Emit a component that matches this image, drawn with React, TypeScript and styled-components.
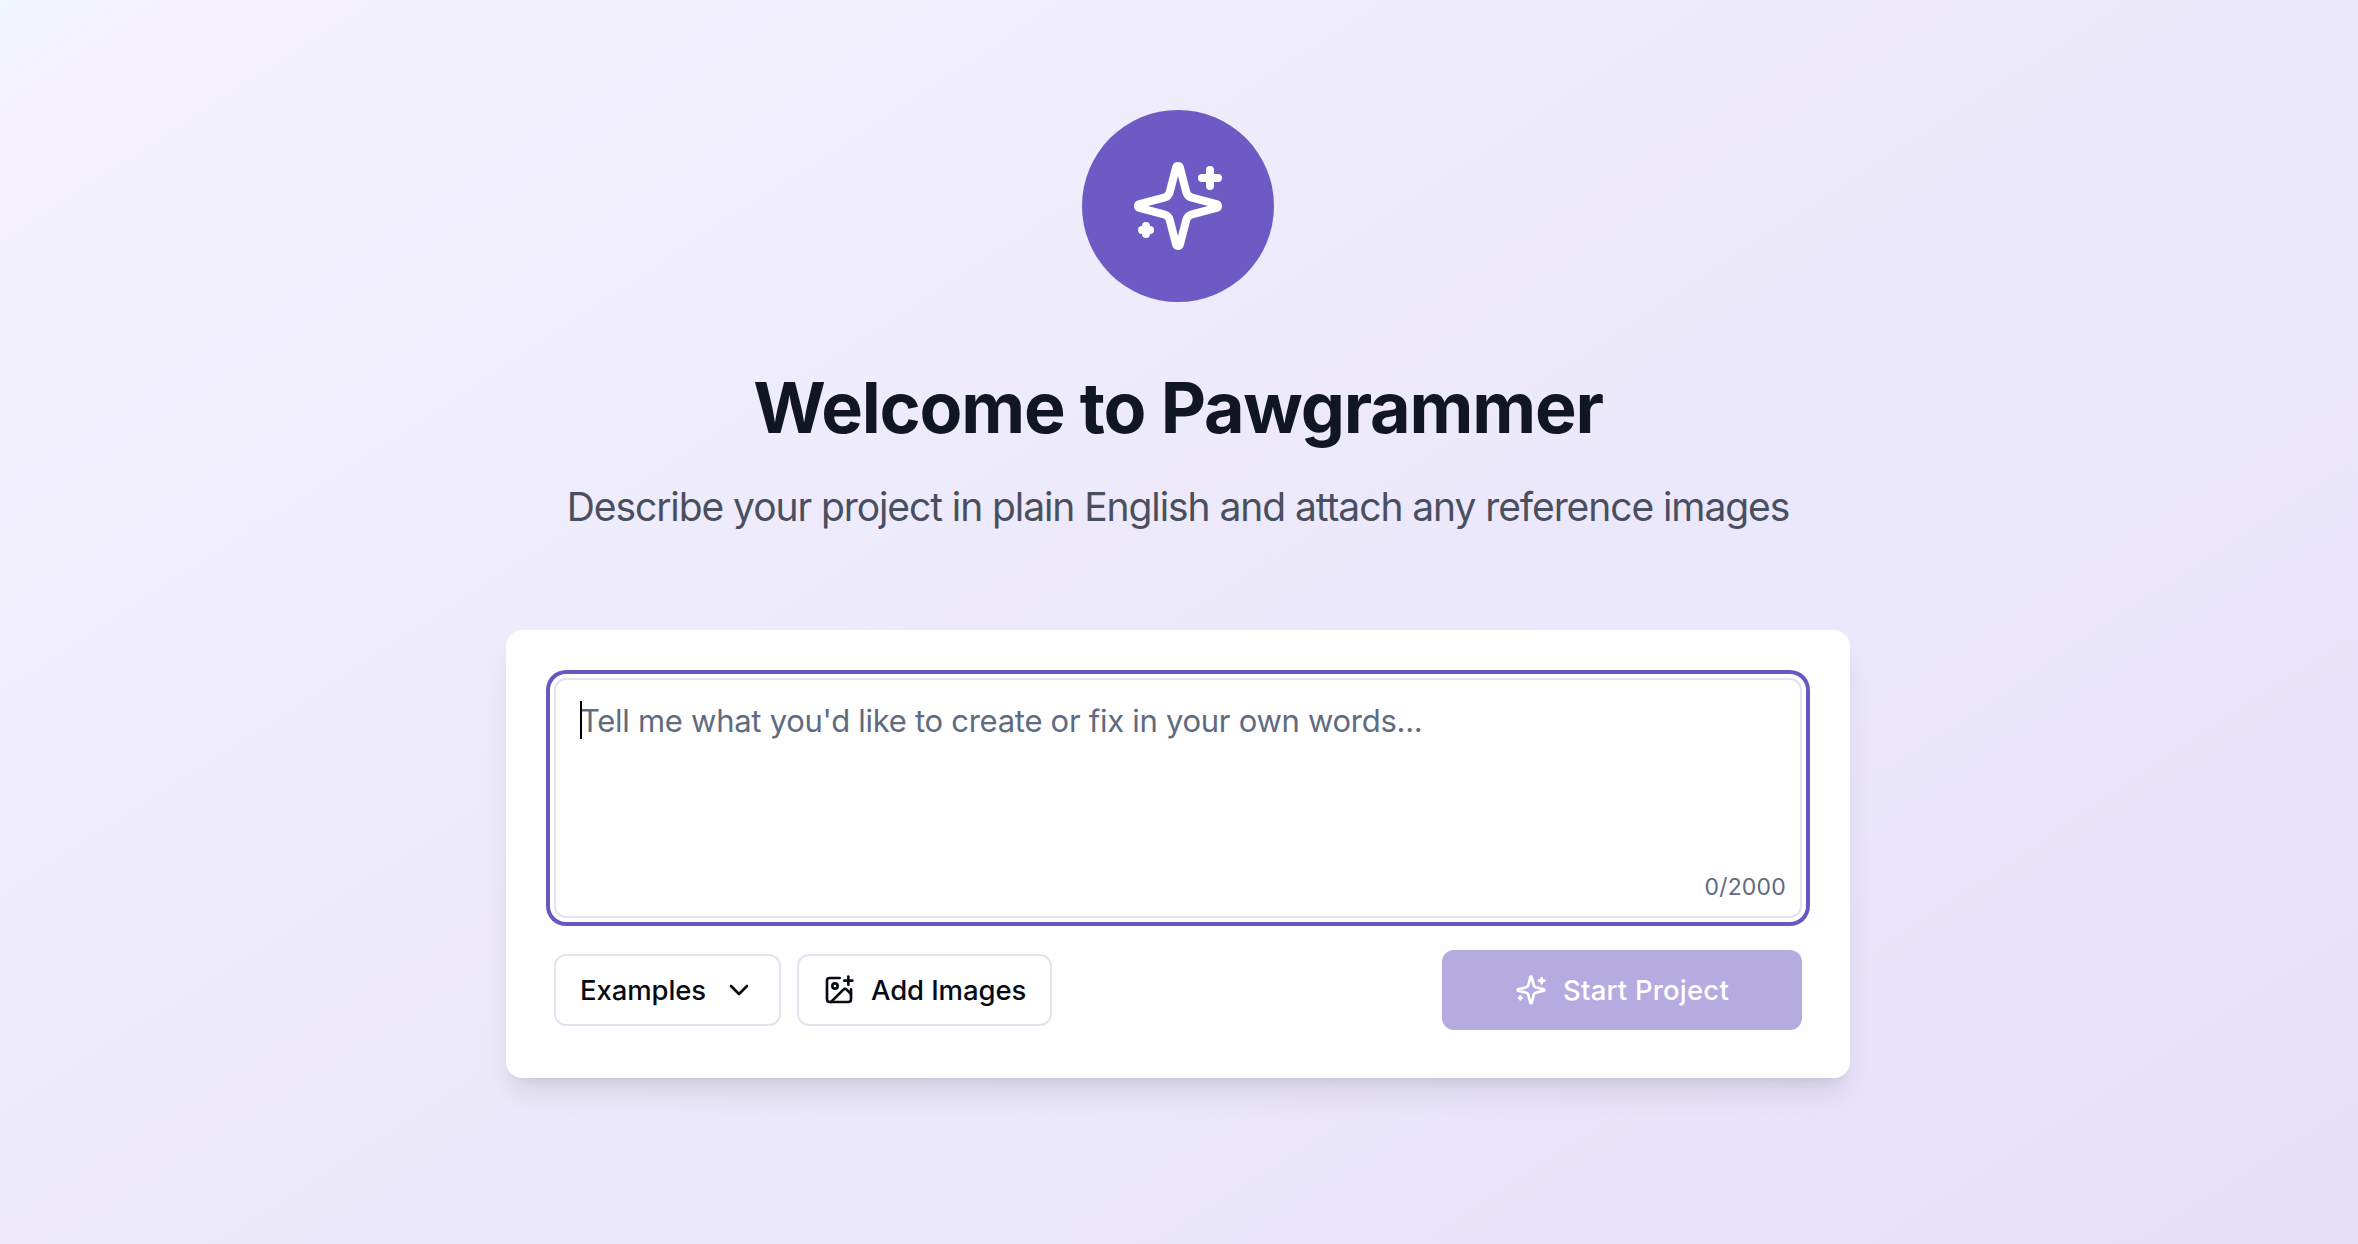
import React from 'react';
import styled, { createGlobalStyle } from 'styled-components';

const GlobalStyle = createGlobalStyle`
  *, *::before, *::after { box-sizing: border-box; }
  body { margin: 0; font-family: Inter, "Liberation Sans", sans-serif; }
`;

const Page = styled.main`
  min-height: 1244px;
  display: flex;
  flex-direction: column;
  align-items: center;
  padding: 110px 2px 0 0;
  background: linear-gradient(147deg, #f2f6fe 0%, #f5f2fd 4%, #f2effd 17%, #eeebfb 36%, #ebe7fc 64%, #e6dff9 100%);
`;

const Badge = styled.div`
  width: 192px;
  height: 192px;
  border-radius: 50%;
  display: flex;
  align-items: center;
  justify-content: center;
  background: #6d5ac4;
  color: #fff;
`;

const Title = styled.h1`
  margin: 66px 0 0;
  font-size: 70px;
  line-height: 80px;
  font-weight: 700;
  letter-spacing: -1.2px;
  color: #111623;
  white-space: nowrap;
`;

const Subtitle = styled.p`
  margin: 31px 0 0;
  font-size: 39px;
  line-height: 56px;
  letter-spacing: -1.08px;
  color: #4a4f5f;
  white-space: nowrap;
`;

const Card = styled.section`
  width: 1344px;
  margin-top: 95px;
  padding: 48px;
  border-radius: 16px;
  background: #fefefe;
  box-shadow: 0 20px 30px -6px rgba(0, 0, 0, 0.1), 0 8px 12px -8px rgba(0, 0, 0, 0.1);
`;

const Field = styled.div`
  position: relative;
  height: 240px;
`;

const Prompt = styled.textarea`
  display: block;
  width: 100%;
  height: 100%;
  padding: 17px 24px;
  border: 2px solid #e2e4ef;
  border-radius: 12px;
  outline: none;
  resize: none;
  background: #fefefe;
  box-shadow: 0 0 0 4px #fff, 0 0 0 8px #6857bf;
  font: 400 31px/48px Inter, "Liberation Sans", sans-serif;
  letter-spacing: -0.28px;
  &::placeholder { color: #5f6b80; opacity: 1; }
`;

const Caret = styled.span`
  position: absolute;
  left: 26px;
  top: 23px;
  width: 2px;
  height: 38px;
  background: #000;
`;

const Counter = styled.span`
  position: absolute;
  right: 16px;
  bottom: 15px;
  font-size: 23px;
  line-height: 32px;
  letter-spacing: 0.2px;
  color: #5f6b80;
`;

const Actions = styled.div`
  display: flex;
  align-items: center;
  justify-content: space-between;
  margin-top: 32px;
`;

const Group = styled.div`
  display: flex;
  gap: 16px;
`;

const Button = styled.button<{ $width: number; $primary?: boolean }>`
  width: ${(p) => p.$width}px;
  height: ${(p) => (p.$primary ? 80 : 72)}px;
  display: flex;
  align-items: center;
  justify-content: ${(p) => (p.$primary ? 'center' : 'space-between')};
  gap: 16px;
  padding: 0 24px;
  border: ${(p) => (p.$primary ? 'none' : '2px solid #e2e4ef')};
  border-radius: 12px;
  background: ${(p) => (p.$primary ? '#b5abe0' : '#fff')};
  color: ${(p) => (p.$primary ? '#fff' : '#080b16')};
  font: 500 27.5px/40px Inter, "Liberation Sans", sans-serif;
  letter-spacing: ${(p) => (p.$primary ? 0.2 : -0.1)}px;
  white-space: nowrap;
`;

const Icon = styled.svg<{ $size: number }>`
  width: ${(p) => p.$size}px;
  height: ${(p) => p.$size}px;
  flex: none;
  fill: none;
  stroke: currentColor;
  stroke-width: 2;
  stroke-linecap: round;
  stroke-linejoin: round;
`;

const Sparkles = ({ size }: { size: number }) => (
  <Icon $size={size} viewBox="0 0 24 24">
    <path d="M9.937 15.5A2 2 0 0 0 8.5 14.063l-6.135-1.582a.5.5 0 0 1 0-.962L8.5 9.936A2 2 0 0 0 9.937 8.5l1.582-6.135a.5.5 0 0 1 .963 0L14.063 8.5A2 2 0 0 0 15.5 9.937l6.135 1.581a.5.5 0 0 1 0 .964L15.5 14.063a2 2 0 0 0-1.437 1.437l-1.582 6.135a.5.5 0 0 1-.963 0z" />
    <path d="M20 3v4M22 5h-4M4 17v2M5 18H3" />
  </Icon>
);

const ChevronDown = () => (
  <Icon $size={32} viewBox="0 0 24 24">
    <path d="m6 9 6 6 6-6" />
  </Icon>
);

const ImagePlus = () => (
  <Icon $size={32} viewBox="0 0 24 24">
    <path d="M16 5h6M19 2v6M21 11.5V19a2 2 0 0 1-2 2H5a2 2 0 0 1-2-2V5a2 2 0 0 1 2-2h7.5" />
    <path d="m21 15-3.086-3.086a2 2 0 0 0-2.828 0L6 21" />
    <circle cx="9" cy="9" r="2" />
  </Icon>
);

export default function App() {
  return (
    <>
      <GlobalStyle />
      <Page>
        <Badge>
          <Sparkles size={96} />
        </Badge>
        <Title>Welcome to Pawgrammer</Title>
        <Subtitle>Describe your project in plain English and attach any reference images</Subtitle>
        <Card>
          <Field>
            <Prompt placeholder="Tell me what you'd like to create or fix in your own words..." />
            <Caret />
            <Counter>0/2000</Counter>
          </Field>
          <Actions>
            <Group>
              <Button $width={227}>
                Examples
                <ChevronDown />
              </Button>
              <Button $width={255}>
                <ImagePlus />
                Add Images
              </Button>
            </Group>
            <Button $width={360} $primary>
              <Sparkles size={32} />
              Start Project
            </Button>
          </Actions>
        </Card>
      </Page>
    </>
  );
}
